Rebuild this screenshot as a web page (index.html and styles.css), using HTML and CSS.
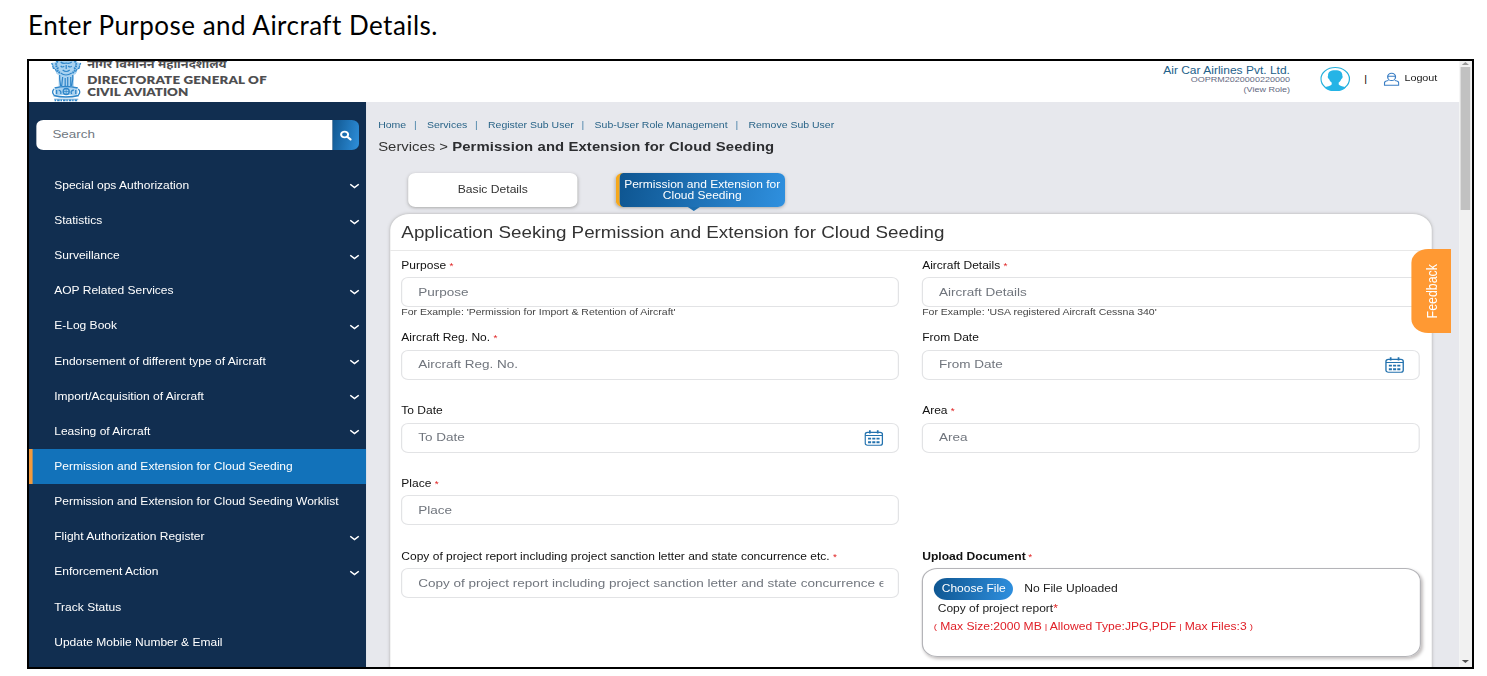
FILE: index.html
```html
<!DOCTYPE html>
<html lang="en">
<head>
<meta charset="utf-8">
<title>Permission and Extension for Cloud Seeding</title>
<link rel="stylesheet" href="styles.css">
</head>
<body>
<svg width="0" height="0" class="defs">
  <symbol id="chev" viewBox="0 0 10 8"><path d="M.8 2 L5 5.8 L9.2 2" fill="none" stroke="#fff" stroke-width="1.5"/></symbol>
  <symbol id="cal" viewBox="0 0 20 20"><g fill="none" stroke="#2372ae" stroke-width="1.4"><rect x="1" y="3" width="18" height="16" rx="2.5"/><path d="M1 7h18" stroke-width="1.2"/></g><path d="M5 .3h1.8v4H5zM13.200 .3h1.8v4h-1.800z" fill="#2372ae"/><g fill="#2372ae"><path d="M4 9.700h3.200v2.300H4zM8.400 9.700h3.200v2.300h-3.200zM12.800 9.700h3.200v2.300h-3.200zM4 14.200h3.200v2.300H4zM8.400 14.200h3.200v2.300h-3.200zM12.800 14.200h3.200v2.300h-3.200z"/></g></symbol>
</svg>
<h1 class="caption">Enter Purpose and Aircraft Details.</h1>
<div class="frame">
 <div class="screen">
  <div class="window">
  <header class="top">
    <svg class="emblem" viewBox="0 0 31 41" preserveAspectRatio="none">
      <path d="M1 2q3 0 5-2h19q2 2 5 2q0 4-3 6l-2 5l-2 1v12l3 1q2 4 0 7H5q-2-3 0-7l3-1V14l-2-1l-2-5q-3-2-3-6z" fill="#a9d2f0"/>
      <g fill="none" stroke="#2f86c9" stroke-width="1.3">
        <path d="M1 2q2 3 1 5q3 0 4 4M30 2q-2 3-1 5q-3 0-4 4" stroke-dasharray="2 .7"/>
        <path d="M7 0q-3 4 0 7q-1 4 3 5M24 0q3 4 0 7q1 4-3 5" stroke-width="2" stroke-dasharray="1.600 .8"/>
        <path d="M10 1q2 2 5.500 1q3 1 5.500-1M10 5q2 2 3.500 0M17.500 5q2 2 3.500 0M12 9q3.500 3 7 0M15.500 4v4M10 12q5 4 11 0" stroke-width="1.200"/>
        <path d="M9 14v4l1 7M12 16l-1 9M14.500 17v8M17 16v9M20 16v9M22 14v4l-1 7" stroke-width="1.200"/>
        <path d="M4 27q11-3 23 0M3 34.500q12 3 25 0" stroke-width="1.600"/>
        <path d="M3.500 28q-3 3 0 6M27.500 28q3 3 0 6M6 29v4M8 29q3 1 2 4M23 29q-4 1-2 4M25 29v4" stroke-width="1.300"/>
        <circle cx="15.500" cy="30.500" r="3"/><path d="M15.500 27.500v6M12.500 30.500h6" stroke-width=".7"/>
        <path d="M3.500 38.200h24" stroke-width=".7"/>
        <path d="M4 39.400h23" stroke-width="1.600" stroke-dasharray="1.500 1 2.500 .8"/>
      </g>
    </svg>
    <div class="brand"><div class="hindi">नागर विमानन महानिदेशालय</div><div class="dg">DIRECTORATE GENERAL OF</div><div class="dg civil">CIVIL AVIATION</div></div>
    <div class="user"><div class="uname">Air Car Airlines Pvt. Ltd.</div><div class="uid">OOPRM2020000220000</div><div class="role">(View Role)</div></div>
    <svg class="avatar" viewBox="0 0 24 24" preserveAspectRatio="none"><circle cx="12" cy="12" r="11.400" fill="#fff" stroke="#25b0dc" stroke-width="1"/><path d="M12 3.200c-4.300 0-6 2.200-5.700 5.800c-.7.600 0 2.800 1 3.400c.4 1.400 1 2.300 1.900 3.100v2c-1 1.500-3.800 1.900-5.900 2.900a11.400 11.400 0 0 0 17.400 0c-2.100-1-4.900-1.400-5.900-2.900v-2c.9-.8 1.500-1.700 1.900-3.100c1-.6 1.700-2.800 1-3.400c.3-3.600-1.400-5.800-5.700-5.800z" fill="#25b4e6"/></svg>
    <span class="bar">|</span>
    <svg class="logicon" viewBox="0 0 12 14" preserveAspectRatio="none"><g fill="none" stroke="#3a7ec4" stroke-width="1"><ellipse cx="6" cy="4.900" rx="3" ry="3.700"/><path d="M3 4.300h6M3.600 8.400q-3.100.5-3.100 2.600v2.300h11V11q0-2.100-3.100-2.600"/></g></svg>
    <span class="logout">Logout</span>
  </header>
  <div class="body">
    <aside class="side">
      <div class="search"><span class="sinput">Search</span><span class="sbtn"><svg viewBox="0 0 12 12" class="mag"><circle cx="4.800" cy="4.800" r="3.500" fill="none" stroke="#fff" stroke-width="2"/><path d="M7.500 7.500l3.300 3.300" stroke="#fff" stroke-width="2.200" stroke-linecap="round"/></svg></span></div>
      <nav class="menu">
        <a class="item">Special ops Authorization<svg class="chev"><use href="#chev"/></svg></a>
        <a class="item">Statistics<svg class="chev"><use href="#chev"/></svg></a>
        <a class="item">Surveillance<svg class="chev"><use href="#chev"/></svg></a>
        <a class="item">AOP Related Services<svg class="chev"><use href="#chev"/></svg></a>
        <a class="item">E-Log Book<svg class="chev"><use href="#chev"/></svg></a>
        <a class="item">Endorsement of different type of Aircraft<svg class="chev"><use href="#chev"/></svg></a>
        <a class="item">Import/Acquisition of Aircraft<svg class="chev"><use href="#chev"/></svg></a>
        <a class="item">Leasing of Aircraft<svg class="chev"><use href="#chev"/></svg></a>
        <a class="item active">Permission and Extension for Cloud Seeding</a>
        <a class="item">Permission and Extension for Cloud Seeding Worklist</a>
        <a class="item">Flight Authorization Register<svg class="chev"><use href="#chev"/></svg></a>
        <a class="item">Enforcement Action<svg class="chev"><use href="#chev"/></svg></a>
        <a class="item">Track Status</a>
        <a class="item">Update Mobile Number &amp; Email</a>
      </nav>
    </aside>
    <main class="main">
      <div class="crumbs"><a>Home</a><i>|</i><a>Services</a><i>|</i><a>Register Sub User</a><i>|</i><a>Sub-User Role Management</a><i>|</i><a>Remove Sub User</a></div>
      <div class="path">Services &gt; <b>Permission and Extension for Cloud Seeding</b></div>
      <div class="tabs"><div class="tab">Basic Details</div><div class="tab on">Permission and Extension for<br>Cloud Seeding</div></div>
      <section class="card">
        <h2 class="chead">Application Seeking Permission and Extension for Cloud Seeding</h2>
        <div class="form">
          <div class="field"><label>Purpose <em>*</em></label><div class="input">Purpose</div><small>For Example: 'Permission for Import &amp; Retention of Aircraft'</small></div>
          <div class="field"><label>Aircraft Details <em>*</em></label><div class="input">Aircraft Details</div><small>For Example: 'USA registered Aircraft Cessna 340'</small></div>
          <div class="field"><label>Aircraft Reg. No. <em>*</em></label><div class="input">Aircraft Reg. No.</div></div>
          <div class="field"><label>From Date</label><div class="input">From Date<svg class="cal"><use href="#cal"/></svg></div></div>
          <div class="field"><label>To Date</label><div class="input">To Date<svg class="cal"><use href="#cal"/></svg></div></div>
          <div class="field"><label>Area <em>*</em></label><div class="input">Area</div></div>
          <div class="field"><label>Place <em>*</em></label><div class="input">Place</div></div>
          <div class="field"></div>
          <div class="field"><label>Copy of project report including project sanction letter and state concurrence etc. <em>*</em></label><div class="input"><span class="clip">Copy of project report including project sanction letter and state concurrence etc.</span></div></div>
          <div class="field"><label class="strong">Upload Document<em>*</em></label>
            <div class="upload"><div class="choose"><span class="cbtn">Choose File</span><span class="nofile">No File Uploaded</span></div><div class="copy">Copy of project report<em>*</em></div><div class="limits"><span>(</span> Max Size:2000 MB <span>|</span> Allowed Type:JPG,PDF <span>|</span> Max Files:3 <span>)</span></div></div>
          </div>
        </div>
      </section>
    </main>
  </div>
  </div>
  <div class="scroll"><i class="up"></i><div class="thumb"></div><i class="down"></i></div>
  <div class="feedback"><span>Feedback</span></div>
 </div>
</div>
</body>
</html>
```
FILE: styles.css
```css
* { box-sizing: border-box; }
body { margin: 0; background: #fff; width: 1487px; height: 676px; overflow: hidden; font-family: "Liberation Sans", Arial, sans-serif; }
.defs { display: block; }
svg { flex: none; }
.caption { margin: 0; padding: 9px 0 0 28px; height: 59px; font: 400 26px/32px Lato, sans-serif; letter-spacing: 0.480px; color: #000; white-space: nowrap; }
.frame { margin-left: 27px; width: 1447px; height: 610px; border: 2px solid #000; overflow: hidden; }
/* The application is laid out at 1202.5px and widened to fill the frame. */
.screen { position: relative; display: flex; width: 1202.5px; height: 606px; transform: scaleX(1.2); transform-origin: 0 0; }
.window { width: 1192px; height: 606px; display: flex; flex-direction: column; overflow: hidden; }
.top { height: 40.500px; flex: none; display: flex; background: #fff; white-space: nowrap; }
.emblem { width: 26px; height: 41px; margin-left: 17.5px; }
.brand { margin-left: 5px; width: 300px; color: #4e4e50; }
.hindi { height: 12px; margin-top: -6px; font: 700 10.600px/18px "Noto Sans", "Noto Sans Devanagari", sans-serif; }
.dg { font: 800 11.1px/13px Lato, sans-serif; margin-top: 5.500px; letter-spacing: 0.160px; }
.civil { margin-top: 0; line-height: 12px; word-spacing: 1px; letter-spacing: 0; }
.user { margin-left: auto; text-align: right; padding-top: 4px; }
.uname { font-size: 10px; line-height: 11px; color: #23618a; }
.uid { font-size: 7.5px; line-height: 8.500px; color: #5f6880; }
.role { font-size: 7.5px; line-height: 9px; color: #5f6880; }
.avatar { width: 25px; height: 24px; margin: 6px 0 0 25px; }
.bar { font-size: 9px; line-height: 36px; width: 3px; margin-left: 12px; }
.logicon { width: 13px; height: 14px; margin: 11px 0 0 13.500px; }
.logout { font-size: 9px; line-height: 35px; margin: 0 18.500px 0 4px; color: #222; letter-spacing: -0.050px; }
.body { display: flex; flex: 1; min-height: 0; }
.side { width: 281px; flex: none; background: #112e50; padding-top: 18.500px; }
.search { display: flex; width: 269.500px; height: 30px; margin: 0 0 17.800px 5.500px; border-radius: 6px; overflow: hidden; }
.sinput { flex: 1; background: #fff; color: #707780; font-size: 11.2px; line-height: 29px; padding-left: 14px; }
.sbtn { width: 22px; background: linear-gradient(100deg, #10568f, #2e8fdb); display: flex; align-items: center; justify-content: center; }
.mag { width: 10px; height: 11px; }
.item { display: flex; align-items: center; justify-content: space-between; height: 35.150px; padding: 0 5.500px 0 21px; color: #fff; font-size: 10.030px; white-space: nowrap; }
.item.active { background: #1272ba; border-left: 3px solid #f39a3d; padding-left: 18px; }
.chev { width: 8.500px; height: 8px; margin-top: 2px; }
.main { flex: 1; background: #e7e8ed; padding: 17px 22px 0 10px; white-space: nowrap; }
.crumbs { height: 13px; display: flex; font-size: 8.750px; line-height: 13px; color: #2a6488; }
.crumbs i { font-style: normal; width: 17.300px; text-align: left; padding-left: 6.500px; color: #4a83a8; }
.path { font-size: 12.400px; line-height: 18px; margin-top: 6.500px; color: #333; }
.path b { letter-spacing: 0.080px; color: #2c2d30; }
.tabs { display: flex; gap: 32px; margin: 16.500px 0 0 25px; height: 34px; }
.tab { width: 141px; height: 34px; border-radius: 6px; background: #fff; box-shadow: 0 1px 3px #aaa; color: #333; font-size: 10.100px; line-height: 11px; text-align: center; display: flex; align-items: center; justify-content: center; padding-bottom: 1px; }
.tab.on { position: relative; padding-bottom: 0; background: linear-gradient(100deg, #0e5590, #2f90df); color: #fff; border-left: 3.500px solid #f6a81c; font-size: 10px; }
.tab.on::after { content: ""; position: absolute; left: 57px; top: 34px; border: 5px solid transparent; border-top: 4px solid #1b6dae; border-bottom: 0; }
.card { margin: 7px 0 0 10px; width: 868px; height: 480px; background: #fff; border-radius: 16px 16px 0 0; box-shadow: 0 0 3px #aaa; }
.chead { margin: 0; height: 37px; border-bottom: 1px solid #e8e8e8; padding-left: 9.300px; font-weight: 400; font-size: 15.660px; line-height: 37px; color: #333; }
.form { display: grid; grid-template-columns: 415px 415px; grid-auto-rows: 72.750px; column-gap: 19px; padding: 3.100px 0 0 9.300px; }
.field { min-width: 0; }
label { display: block; height: 23.500px; line-height: 24px; font-size: 10px; color: #111; }
label.strong { font-weight: 700; font-size: 10.100px; }
em { font-style: normal; font-weight: 400; color: #e02424; font-size: 8.500px; }
.strong em { margin-left: 2px; }
.input { display: flex; justify-content: space-between; align-items: center; height: 30px; border: 1.500px solid #e2e3e5; border-radius: 6px; padding: 0 12px 1px 13px; font-size: 11.270px; color: #70757d; overflow: hidden; }
.clip { overflow: hidden; }
.cal { width: 16px; height: 16px; margin-top: 1px; }
small { display: block; font-size: 8.750px; line-height: 10px; color: #444; }
.upload { height: 89px; width: 415.500px; border: 1px solid #b4b4b8; border-radius: 13px; box-shadow: 1px 2px 3px #c4c0c0; padding: 8.500px 0 0 9px; font-size: 10.100px; color: #222; }
.choose { display: flex; align-items: center; height: 22px; }
.cbtn { width: 66px; height: 22px; line-height: 21px; border-radius: 11px; background: linear-gradient(100deg, #0e5590, #2f90df); color: #fff; text-align: center; font-size: 10px; }
.nofile { margin-left: 9px; }
.copy { padding-left: 3px; line-height: 17px; margin-top: 0.800px; font-size: 10px; }
.copy em { font-size: 10px; }
.limits { color: #e02028; line-height: 17px; font-size: 10.100px; margin-top: 0.500px; }
.limits span { font-size: 8px; vertical-align: 0.500px; margin: 0 -0.250px; }
.scroll { width: 10.500px; background: #f1f1f1; display: flex; flex-direction: column; align-items: center; }
.up, .down { border: 3px solid transparent; }
.up { border-top: 0; border-bottom: 3px solid #999; margin-top: 1px; }
.thumb { width: 8px; height: 143px; background: #c1c1c1; margin-top: 2px; }
.down { border-bottom: 0; border-top: 3px solid #505050; margin: auto 0 4px; }
.feedback { position: absolute; left: 1152px; top: 188px; width: 33px; height: 84px; background: #ff9933; border-radius: 14px 0 0 14px; display: flex; align-items: center; justify-content: center; color: #fff; font-size: 12.400px; }
.feedback span { writing-mode: vertical-rl; transform: rotate(180deg); }
```
